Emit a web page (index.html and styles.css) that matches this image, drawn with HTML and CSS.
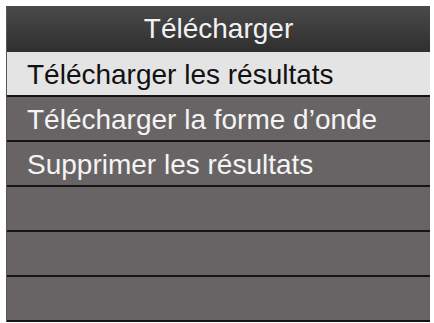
FILE: index.html
```html
<!DOCTYPE html>
<html lang="fr">
<head>
<meta charset="utf-8">
<link rel="stylesheet" href="styles.css">
</head>
<body>
<div class="panel">
  <div class="header">Télécharger</div>
  <div class="row selected">Télécharger les résultats</div>
  <div class="row">Télécharger la forme d’onde</div>
  <div class="row">Supprimer les résultats</div>
  <div class="row"></div>
  <div class="row"></div>
  <div class="row"></div>
</div>
</body>
</html>
```
FILE: styles.css
```css
html, body {
  margin: 0;
  padding: 0;
  background: #ffffff;
}
body {
  padding: 6px 4px 0 6px;
  font-family: "Liberation Sans", Arial, sans-serif;
}
.panel {
  width: 424px;
  background: #686465;
  border-left: 1px solid #5a5758;
  box-sizing: border-box;
}
.header {
  height: 46px;
  line-height: 46px;
  text-align: center;
  color: #f2f2f2;
  font-size: 28px;
  background: linear-gradient(#4a4a4a, #2f2f2f);
}
.row {
  height: 41px;
  padding-top: 2px;
  line-height: 41px;
  border-bottom: 2px solid #141414;
  padding-left: 20px;
  font-size: 28px;
  color: #f4f4f4;
  background: #686465;
}
.row.selected {
  background: #e4e4e4;
  color: #111111;
}
```
